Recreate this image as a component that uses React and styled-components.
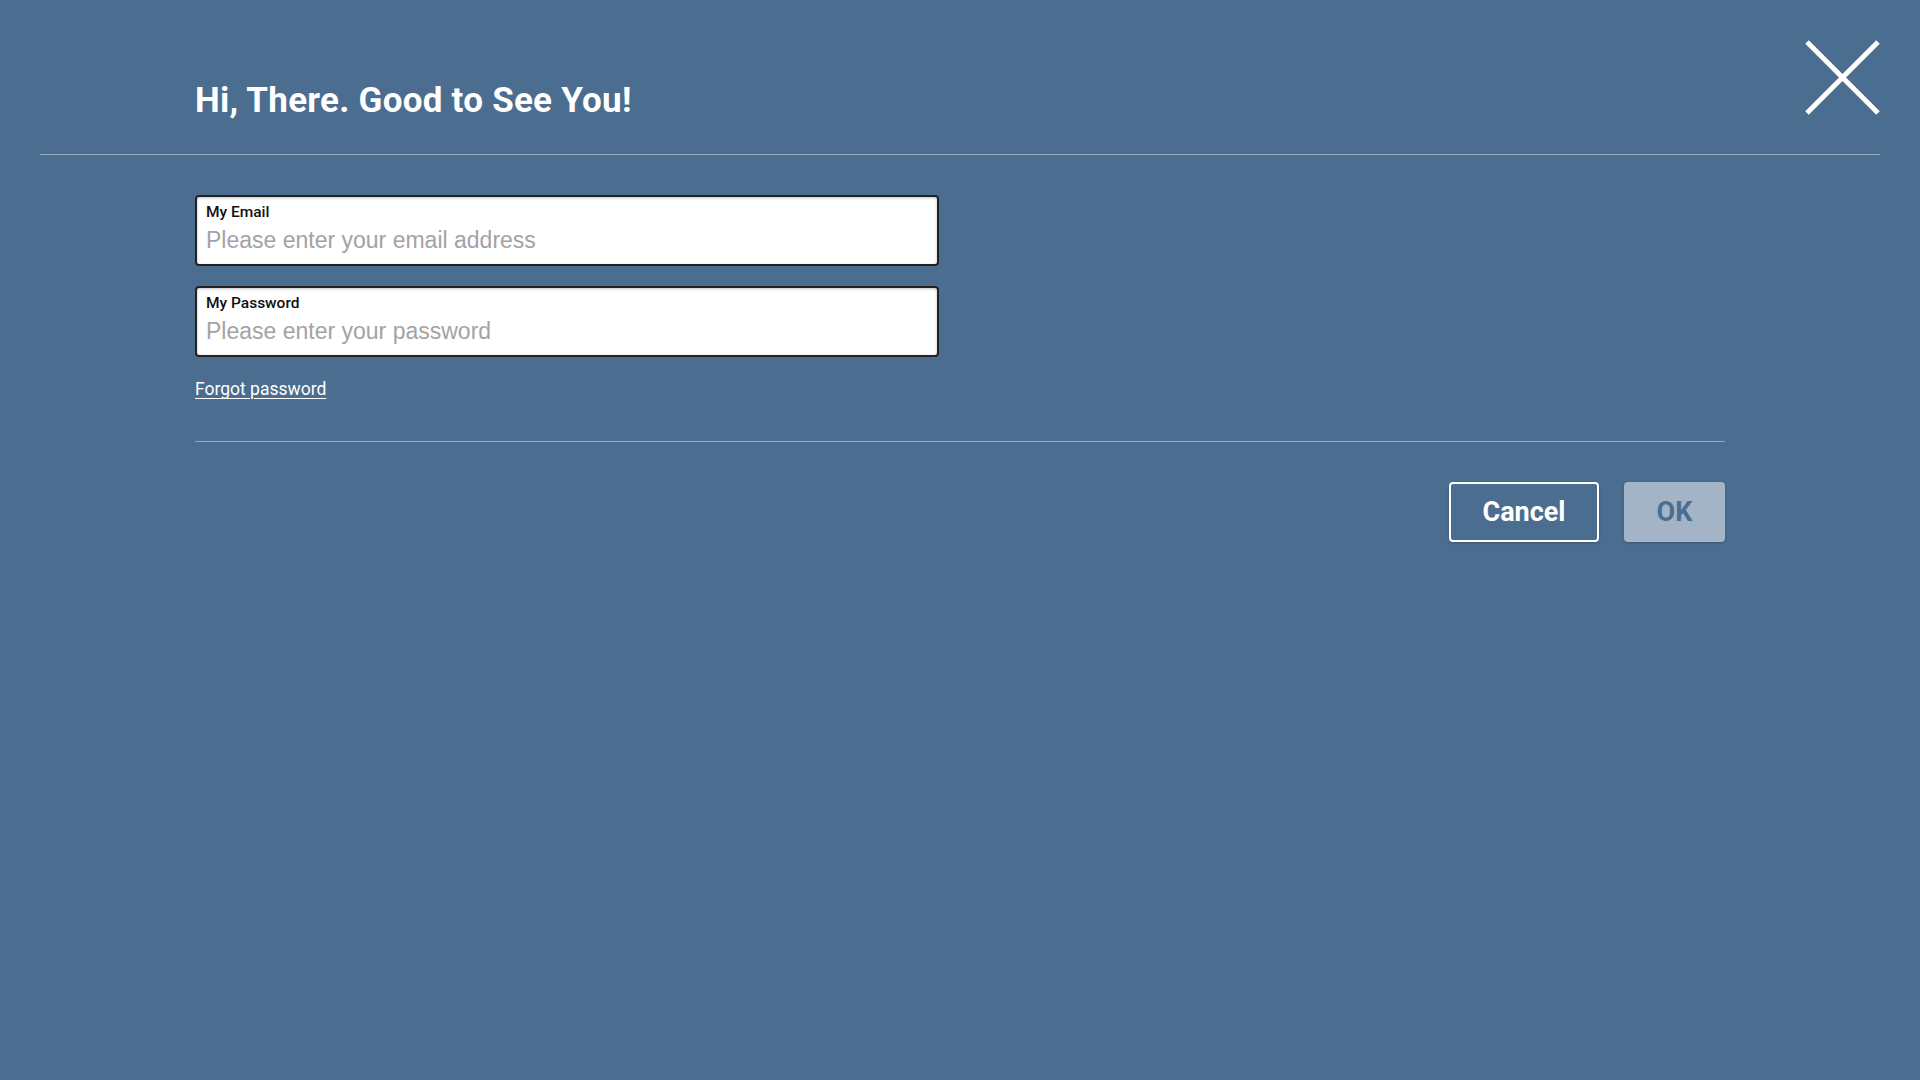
import React from 'react';
import styled, { createGlobalStyle } from 'styled-components';

const GlobalStyle = createGlobalStyle`
	html, body {
		margin: 0;
		padding: 0;
		background: #4b6d90;
	}
	body {
		font-family: Roboto, "Liberation Sans", sans-serif;
		min-height: 1080px;
	}
	* {
		box-sizing: border-box;
	}
`;

function Field({ label, placeholder, type }) {
	return (
		<FieldBox>
			<FieldLabel>{label}</FieldLabel>
			<FieldInput type={type} placeholder={placeholder} />
		</FieldBox>
	);
}

function CloseIcon() {
	return (
		<svg width="75" height="75" viewBox="0 0 75 75">
			<path d="M2 2 L73 73 M73 2 L2 73" stroke="#fff" strokeWidth="5" fill="none" />
		</svg>
	);
}

export default function App() {
	return (
		<Page>
			<GlobalStyle />
			<Header>
				<Title>Hi, There. Good to See You!</Title>
				<CloseButton aria-label="Close">
					<CloseIcon />
				</CloseButton>
			</Header>
			<Divider />
			<Content>
				<Fields>
					<Field label="My Email" type="email" placeholder="Please enter your email address" />
					<Field label="My Password" type="password" placeholder="Please enter your password" />
				</Fields>
				<ForgotLink href="#">Forgot password</ForgotLink>
				<ContentDivider />
				<Actions>
					<Button variant="outline">Cancel</Button>
					<Button variant="disabled">OK</Button>
				</Actions>
			</Content>
		</Page>
	);
}

const Page = styled.div`
	padding: 40px 40px 0;
	min-height: 1080px;
	background: #4b6d90;
`;

const Header = styled.div`
	display: flex;
	justify-content: space-between;
	align-items: flex-start;
	height: 114px;
`;

const Title = styled.h1`
	margin: 40px 0 0 155px;
	font-size: 35px;
	line-height: 41px;
	font-weight: 700;
	letter-spacing: 0.25px;
	color: #fff;
`;

const CloseButton = styled.button`
	display: block;
	width: 75px;
	height: 75px;
	padding: 0;
	border: 0;
	background: none;
	cursor: pointer;

	svg {
		display: block;
	}
`;

const Divider = styled.hr`
	margin: 0;
	border: 0;
	height: 1px;
	background: #97a8ba;
`;

const Content = styled.div`
	padding: 40px 155px 0;
	display: flex;
	flex-direction: column;
`;

const Fields = styled.div`
	display: flex;
	flex-direction: column;
	gap: 20px;
`;

const FieldBox = styled.label`
	display: flex;
	flex-direction: column;
	width: 744px;
	height: 71px;
	padding: 6px 9px 0;
	background: #fff;
	border: 2px solid #222;
	border-radius: 4px;
	box-shadow: inset 0 1px 3px rgba(0, 0, 0, 0.25);
`;

const FieldLabel = styled.span`
	font-size: 15.5px;
	line-height: 18px;
	font-weight: 500;
	color: #111;
`;

const FieldInput = styled.input`
	margin-top: 6px;
	padding: 0;
	border: 0;
	outline: none;
	background: transparent;
	font-family: "Liberation Sans", Arial, sans-serif;
	font-size: 23px;
	line-height: 26px;
	height: 26px;
	color: #222;

	&::placeholder {
		color: #a3a3a3;
	}
`;

const ForgotLink = styled.a`
	align-self: flex-start;
	margin-top: 22px;
	font-size: 17.5px;
	line-height: 20px;
	color: #fff;
	text-decoration: underline;
	text-underline-offset: 3px;
	text-decoration-thickness: 1px;
`;

const ContentDivider = styled.hr`
	margin: 42px 0 0;
	border: 0;
	height: 1px;
	background: #8ea8c6;
`;

const Actions = styled.div`
	display: flex;
	justify-content: flex-end;
	gap: 25px;
	margin-top: 40px;
`;

const Button = styled.button`
	height: 60px;
	padding: 0;
	font-family: Roboto, "Liberation Sans", sans-serif;
	font-size: 27px;
	font-weight: 700;
	border-radius: 4px;
	cursor: pointer;
	box-shadow: 0 1px 3px rgba(0, 0, 0, 0.2);
	width: ${(p) => (p.variant === 'outline' ? '150px' : '101px')};
	color: ${(p) => (p.variant === 'outline' ? '#fff' : '#4b6d90')};
	background: ${(p) => (p.variant === 'outline' ? 'transparent' : '#a4b4c7')};
	border: ${(p) => (p.variant === 'outline' ? '2px solid #fff' : '0')};
`;
